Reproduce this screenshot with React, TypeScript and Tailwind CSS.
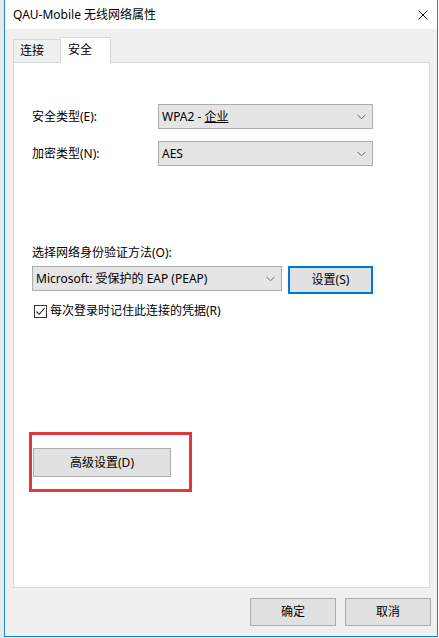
import React from 'react';

const font = { fontFamily: '"Noto Sans", "Noto Sans CJK SC", sans-serif' };

function Chevron() {
  return (
    <svg width="9" height="6" viewBox="0 0 9 6" className="shrink-0">
      <path d="M0.5 0.8 L4.5 4.8 L8.5 0.8" fill="none" stroke="#6b6b6b" strokeWidth="1" />
    </svg>
  );
}

function Select({ width, children }: { width: string; children: React.ReactNode }) {
  return (
    <div className={`flex h-[25px] ${width} items-center justify-between border border-[#adadad] bg-[#e5e5e5] pl-[3px] pr-[6px] text-[12px] leading-[16px] text-black`}>
      <span>{children}</span>
      <Chevron />
    </div>
  );
}

function Button({ className, children }: { className: string; children: React.ReactNode }) {
  return (
    <div className={`flex items-center justify-center bg-[#e1e1e1] text-[12px] leading-[16px] text-black ${className}`}>
      {children}
    </div>
  );
}

export default function App() {
  return (
    <div className="flex h-[638px] w-[439px] bg-[#eaeaea]" style={font}>
      {/* window behind */}
      <div className="w-[4px] bg-[#e8e8e8]" />

      <div className="flex h-[637px] w-[434px] flex-col border-x border-b border-[#1883d7]">
        {/* Title bar */}
        <div className="flex h-[29px] items-center justify-between bg-white pl-[8px] pr-[9px]">
          <span className="text-[12px] leading-[16px] text-black">QAU-Mobile 无线网络属性</span>
          <svg width="10" height="10" viewBox="0 0 10 10">
            <path d="M0.5 0.5 L9.5 9.5 M9.5 0.5 L0.5 9.5" stroke="#111" strokeWidth="1" />
          </svg>
        </div>

        {/* Body */}
        <div className="flex flex-1 flex-col bg-[#f0f0f0] pl-[8px] pt-[8px]">
          {/* Tabs */}
          <div className="flex h-[25px] items-end">
            <div className="flex h-[23px] w-[47px] items-center border-l border-t border-[#d9d9d9] bg-[#f0f0f0] pl-[6px] text-[12px] leading-[16px] text-black">
              连接
            </div>
            <div className="relative z-10 -mb-px flex h-[26px] w-[51px] items-start border-x border-t border-[#d9d9d9] bg-white pl-[7px] pt-[4px] text-[12px] leading-[16px] text-black">
              安全
            </div>
          </div>

          {/* Panel */}
          <div className="flex h-[526px] w-[417px] flex-col border border-[#d9d9d9] bg-white pl-[18px] pt-[41px] text-[12px] leading-[16px] text-black">
            <div className="flex items-center">
              <span className="w-[126px]">安全类型(E):</span>
              <Select width="w-[215px]">
                WPA2 - <span className="underline">企业</span>
              </Select>
            </div>
            <div className="mt-[12px] flex items-center">
              <span className="w-[126px]">加密类型(N):</span>
              <Select width="w-[215px]">AES</Select>
            </div>

            <div className="mt-[79px]">选择网络身份验证方法(O):</div>
            <div className="mt-[5px] flex items-start">
              <Select width="w-[250px]">Microsoft: 受保护的 EAP (PEAP)</Select>
              <Button className="ml-[6px] h-[28px] w-[85px] border-2 border-[#0078d7]">设置(S)</Button>
            </div>

            <div className="ml-[2px] mt-[9px] flex h-[16px] items-center">
              <div className="flex h-[13px] w-[13px] items-center justify-center border border-[#333] bg-white">
                <svg width="11" height="11" viewBox="0 0 11 11">
                  <path d="M1.5 5.5 L4.2 8.3 L9.6 2.2" fill="none" stroke="#222" strokeWidth="1.1" />
                </svg>
              </div>
              <span className="ml-[3px]">每次登录时记住此连接的凭据(R)</span>
            </div>

            <div className="-ml-[3px] mt-[113px] h-[60px] w-[163px] border-[3px] border-[#e3383b] pl-[1px] pt-[13px]">
              <Button className="h-[29px] w-[138px] border border-[#adadad]">高级设置(D)</Button>
            </div>
          </div>

          {/* Footer */}
          <div className="mt-[10px] flex justify-end gap-[9px] pr-[6px]">
            <Button className="h-[28px] w-[86px] border border-[#adadad]">确定</Button>
            <Button className="h-[28px] w-[86px] border border-[#adadad]">取消</Button>
          </div>
        </div>
      </div>

      <div className="w-[1px] bg-white" />
    </div>
  );
}
